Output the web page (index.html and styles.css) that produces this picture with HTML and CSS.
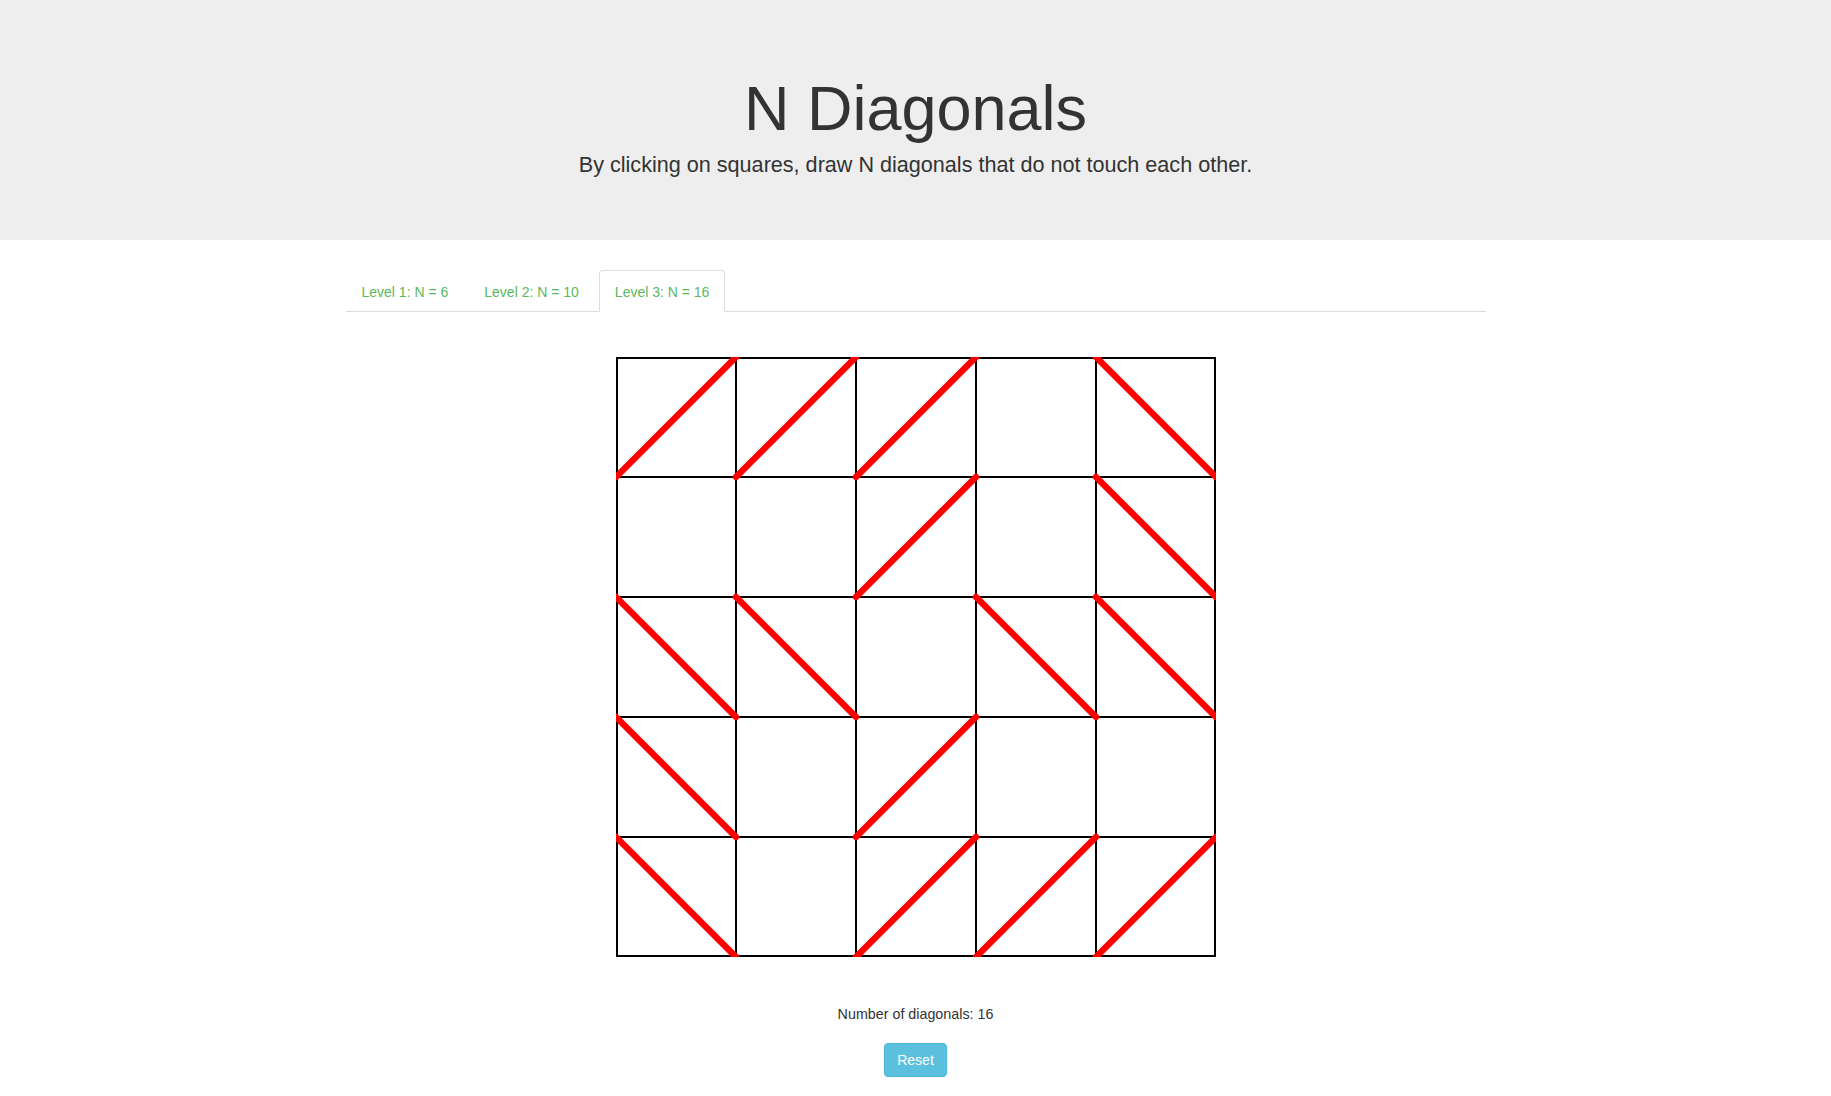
FILE: index.html
```html
<!DOCTYPE html>
<html>
<head>
<meta charset="utf-8">
<link rel="stylesheet" href="styles.css">
<title>N Diagonals</title>
</head>
<body>
<div class="jumbotron">
  <h1 class="title">N Diagonals</h1>
  <p class="lead">By clicking on squares, draw N diagonals that do not touch each other.</p>
</div>
<div class="container">
  <ul class="tabs">
    <li class="tab"><a>Level 1: N = 6</a></li>
    <li class="tab"><a>Level 2: N = 10</a></li>
    <li class="tab active"><a>Level 3: N = 16</a></li>
  </ul>
  <div class="game">
    <svg class="board" width="600" height="600" viewBox="0 0 600 600">
      <g class="grid" stroke="#000" stroke-width="2" fill="none">
        <line x1="120" y1="0" x2="120" y2="600"/>
        <line x1="240" y1="0" x2="240" y2="600"/>
        <line x1="360" y1="0" x2="360" y2="600"/>
        <line x1="480" y1="0" x2="480" y2="600"/>
        <line x1="0" y1="120" x2="600" y2="120"/>
        <line x1="0" y1="240" x2="600" y2="240"/>
        <line x1="0" y1="360" x2="600" y2="360"/>
        <line x1="0" y1="480" x2="600" y2="480"/>
        <rect x="1" y="1" width="598" height="598"/>
      </g>
      <g class="diag" stroke="#ff0000" stroke-width="6.5" stroke-linecap="round">
        <!-- row 0 -->
        <line x1="0" y1="120" x2="120" y2="0"/>
        <line x1="120" y1="120" x2="240" y2="0"/>
        <line x1="240" y1="120" x2="360" y2="0"/>
        <line x1="480" y1="0" x2="600" y2="120"/>
        <!-- row 1 -->
        <line x1="240" y1="240" x2="360" y2="120"/>
        <line x1="480" y1="120" x2="600" y2="240"/>
        <!-- row 2 -->
        <line x1="0" y1="240" x2="120" y2="360"/>
        <line x1="120" y1="240" x2="240" y2="360"/>
        <line x1="360" y1="240" x2="480" y2="360"/>
        <line x1="480" y1="240" x2="600" y2="360"/>
        <!-- row 3 -->
        <line x1="0" y1="360" x2="120" y2="480"/>
        <line x1="240" y1="480" x2="360" y2="360"/>
        <!-- row 4 -->
        <line x1="0" y1="480" x2="120" y2="600"/>
        <line x1="240" y1="600" x2="360" y2="480"/>
        <line x1="360" y1="600" x2="480" y2="480"/>
        <line x1="480" y1="600" x2="600" y2="480"/>
      </g>
    </svg>
    <p class="count">Number of diagonals: 16</p>
    <button class="btn-reset">Reset</button>
  </div>
</div>
</body>
</html>
```
FILE: styles.css
```css
html, body {
  margin: 0;
  padding: 0;
}
body {
  font-family: "Liberation Sans", Arial, Helvetica, sans-serif;
  font-size: 14px;
  line-height: 1.42857;
  color: #333;
  background: #fff;
}
.jumbotron {
  background: #eeeeee;
  padding: 48px 0;
  margin-bottom: 30px;
  text-align: center;
  height: 144px;
}
.title {
  font-size: 63px;
  font-weight: 500;
  line-height: 69px;
  margin: 26px 0 7px;
  color: #333;
}
.lead {
  font-size: 21.6px;
  font-weight: 200;
  margin: 0;
  line-height: 30px;
}
.container {
  width: 1140px;
  margin: 0 auto;
  padding: 0 15px;
}
.tabs {
  list-style: none;
  margin: 0;
  padding: 0;
  display: flex;
  border-bottom: 1px solid #ddd;
}
.tab {
  margin-bottom: -1px;
  margin-right: 4px;
}
.tab a {
  display: block;
  padding: 11px 15px 9px;
  line-height: 20px;
  color: #5cb85c;
  border: 1px solid transparent;
  border-radius: 4px 4px 0 0;
  cursor: pointer;
}
.tab.active a {
  border-color: #ddd #ddd transparent;
  background: #fff;
}
.game {
  display: flex;
  flex-direction: column;
  align-items: center;
  padding-top: 45px;
}
.board {
  display: block;
}
.count {
  margin: 47px 0 19px;
  line-height: 20px;
  font-size: 14.3px;
}
.btn-reset {
  font-family: inherit;
  font-size: 14px;
  line-height: 20px;
  padding: 6px 12px;
  color: #fff;
  background: #5bc0de;
  border: 1px solid #46b8da;
  border-radius: 4px;
  cursor: pointer;
}
```
